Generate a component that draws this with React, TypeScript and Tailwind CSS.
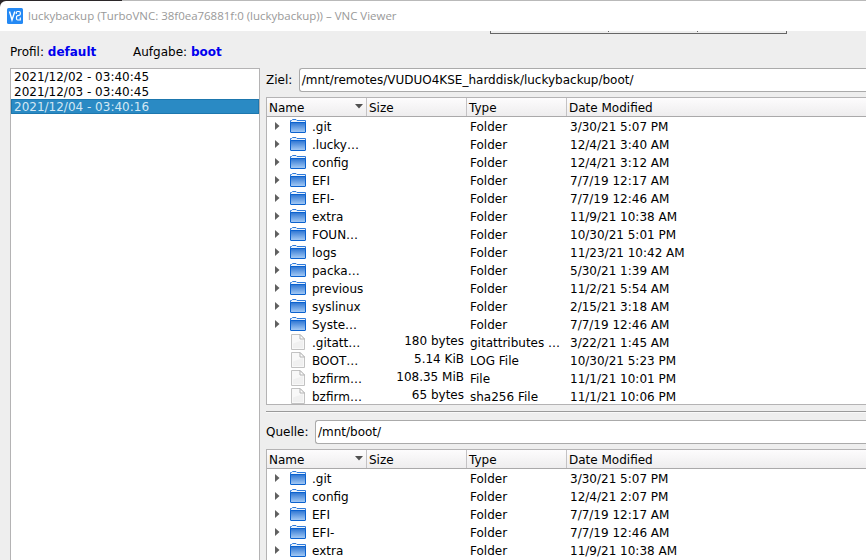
const snapshots = [
  { label: "2021/12/02 - 03:40:45", selected: false },
  { label: "2021/12/03 - 03:40:45", selected: false },
  { label: "2021/12/04 - 03:40:16", selected: true },
];

type Entry = {
  name: string;
  size?: string;
  type: string;
  date: string;
};

const targetEntries: Entry[] = [
  { name: ".git", type: "Folder", date: "3/30/21 5:07 PM" },
  { name: ".lucky…", type: "Folder", date: "12/4/21 3:40 AM" },
  { name: "config", type: "Folder", date: "12/4/21 3:12 AM" },
  { name: "EFI", type: "Folder", date: "7/7/19 12:17 AM" },
  { name: "EFI-", type: "Folder", date: "7/7/19 12:46 AM" },
  { name: "extra", type: "Folder", date: "11/9/21 10:38 AM" },
  { name: "FOUN…", type: "Folder", date: "10/30/21 5:01 PM" },
  { name: "logs", type: "Folder", date: "11/23/21 10:42 AM" },
  { name: "packa…", type: "Folder", date: "5/30/21 1:39 AM" },
  { name: "previous", type: "Folder", date: "11/2/21 5:54 AM" },
  { name: "syslinux", type: "Folder", date: "2/15/21 3:18 AM" },
  { name: "Syste…", type: "Folder", date: "7/7/19 12:46 AM" },
  { name: ".gitatt…", size: "180 bytes", type: "gitattributes …", date: "3/22/21 1:45 AM" },
  { name: "BOOT…", size: "5.14 KiB", type: "LOG File", date: "10/30/21 5:23 PM" },
  { name: "bzfirm…", size: "108.35 MiB", type: "File", date: "11/1/21 10:01 PM" },
  { name: "bzfirm…", size: "65 bytes", type: "sha256 File", date: "11/1/21 10:06 PM" },
];

const sourceEntries: Entry[] = [
  { name: ".git", type: "Folder", date: "3/30/21 5:07 PM" },
  { name: "config", type: "Folder", date: "12/4/21 2:07 PM" },
  { name: "EFI", type: "Folder", date: "7/7/19 12:17 AM" },
  { name: "EFI-", type: "Folder", date: "7/7/19 12:46 AM" },
  { name: "extra", type: "Folder", date: "11/9/21 10:38 AM" },
];

const FolderIcon = () => (
  <svg width="16" height="16" viewBox="0 0 16 16" className="shrink-0">
    <defs>
      <linearGradient id="folder" x1="0" y1="0" x2="0" y2="1">
        <stop offset="0" stopColor="#2b74d2" />
        <stop offset="1" stopColor="#a9cdf6" />
      </linearGradient>
    </defs>
    <path d="M.5 5V2.500h1L2.500 1.500h3.500l1 1h8.500V5z" fill="#eaf3fd" stroke="#2f7bdb" />
    <rect x=".5" y="4.500" width="15" height="10" rx=".5" fill="url(#folder)" stroke="#0b62cf" />
  </svg>
);

const FileIcon = () => (
  <svg width="16" height="16" viewBox="0 0 16 16" className="shrink-0">
    <path d="M1.500.5h8.500l4.500 4.500v10.500h-13z" fill="#f8f8f8" stroke="#c2c2c2" />
    <path d="M3 14V9.500L13 6v8z" fill="#f0f0f0" />
    <path d="M10 .5V5h4.500z" fill="#fff" stroke="#b2b2b2" />
  </svg>
);

const PathField = ({ label, value }: { label: string; value: string }) => (
  <div className="flex h-6 shrink-0 items-center">
    <span className="mr-[6.400px]">{label}</span>
    <div className="flex h-6 flex-1 items-center rounded-l-[3px] border border-r-0 border-[#aaaaaa] bg-white pl-0.5">
      {value}
    </div>
  </div>
);

const TableHeader = () => (
  <div className="flex h-[19px] shrink-0 border-b border-[#aaa9aa] bg-gradient-to-b from-[#fdfcfd] to-[#eeedee] leading-[21px]">
    <div className="flex w-[100px] justify-between border-r border-[#c4c2c4] pl-0.5 pr-[3px]">
      Name
      <svg width="8" height="5" viewBox="0 0 8 5" className="mt-[6px]">
        <path d="M0 0h8L4 4.500z" fill="#505050" />
      </svg>
    </div>
    <div className="w-[100px] border-r border-[#c4c2c4] pl-0.5">Size</div>
    <div className="w-[100px] border-r border-[#c4c2c4] pl-0.5">Type</div>
    <div className="pl-0.5">Date Modified</div>
  </div>
);

const FileTable = ({ entries }: { entries: Entry[] }) => (
  <>
    <TableHeader />
    {entries.map((entry, index) => (
      <div key={index} className="flex h-[18px] shrink-0 leading-[20px]">
        <div className="flex w-[100px] items-center">
          <span className="flex w-[23px] pl-2">
            {!entry.size && (
              <svg width="5" height="8" viewBox="0 0 5 8">
                <path d="M0 0l4.500 4L0 8z" fill="#606060" />
              </svg>
            )}
          </span>
          {entry.size ? <FileIcon /> : <FolderIcon />}
          <span className="ml-[6px] pt-px">{entry.name}</span>
        </div>
        <div className="w-[97px] text-right leading-[16px]">{entry.size}</div>
        <div className="w-[100px] pl-[6px]">{entry.type}</div>
        <div className="pl-[6px]">{entry.date}</div>
      </div>
    ))}
  </>
);

const App = () => (
  <div className="flex h-[560px] w-[866px] flex-col overflow-hidden bg-[#eeeeee] font-['DejaVu_Sans',sans-serif] text-xs whitespace-nowrap text-black">
    {/* Window title bar */}
    <div className="flex h-[31px] shrink-0 flex-col bg-[#2b2729]">
      <div className="flex h-px shrink-0">
        <div className="w-[122px] bg-[#2b2729]" />
        <div className="flex-1 bg-[#b9b9b9]" />
      </div>
      <div className="flex flex-1 items-center rounded-tl-[6px] bg-white pl-[7px]">
        <svg width="16" height="16" viewBox="0 0 16 16" className="mb-px">
          <rect width="16" height="16" rx="1.500" fill="#2489f4" />
          <path d="M2.500 3.500l2.500 8.500 2.800-8.500" fill="none" stroke="#fff" strokeWidth="1.400" />
          <path d="M9.300 6V4.700q0-1.200 1.200-1.200h1.600q1.200 0 1.200 1.200v1.200q0 1.200-1.200 1.400l-1.400.3q-1.200.3-1.200 1.500v1.700q0 1.200 1.200 1.200h2.600V9.500" fill="none" stroke="#fff" strokeWidth="1.200" />
        </svg>
        <span className="ml-[5px] font-['Open_Sans',sans-serif] text-[11.470px] text-[#999999]">
          luckybackup (TurboVNC: 38f0ea76881f:0 (luckybackup)) – VNC Viewer
        </span>
      </div>
    </div>

    {/* Lower edge of the viewer toolbar */}
    <div className="ml-[490px] flex h-[3px] w-[297px] shrink-0 border-x border-b border-[#666666]">
      <div className="h-px w-[118px] border-r border-[#666666]" />
      <div className="h-px w-[89px] border-r border-[#666666]" />
    </div>

    <div className="flex h-[34px] shrink-0 items-center pl-[10px] pt-[2px]">
      <span className="w-[123px]">
        Profil: <b className="text-[#0000ee]">default</b>
      </span>
      <span>
        Aufgabe: <b className="text-[#0000ee]">boot</b>
      </span>
    </div>

    <div className="flex min-h-0 flex-1 pl-[10px]">
      <div className="w-[250px] shrink-0 border border-b-0 border-[#b4b3b4] bg-white">
        {snapshots.map((snapshot) => (
          <div
            key={snapshot.label}
            className={
              snapshot.selected
                ? "h-[15px] border border-[#1d77ae] bg-[#2a8ac4] pl-0.5 leading-[14px] text-[#d3e8f4]"
                : "h-[15px] pl-[3px] leading-[16px]"
            }
          >
            {snapshot.label}
          </div>
        ))}
      </div>

      <div className="ml-[6px] flex flex-1 flex-col">
        <PathField label="Ziel:" value="/mnt/remotes/VUDUO4KSE_harddisk/luckybackup/boot/" />
        <div className="mt-[5px] flex h-[308px] shrink-0 flex-col overflow-hidden border border-r-0 border-[#b4b3b4] bg-white">
          <FileTable entries={targetEntries} />
        </div>
        <div className="mt-[6px] h-[2px] shrink-0 border-t border-b border-t-[#9a9a9a] border-b-[#f9f9f9]" />
        <div className="mt-[7px] flex flex-1 flex-col">
          <PathField label="Quelle:" value="/mnt/boot/" />
          <div className="mt-[5px] flex flex-1 flex-col overflow-hidden border border-r-0 border-b-0 border-[#b4b3b4] bg-white">
            <FileTable entries={sourceEntries} />
          </div>
        </div>
      </div>
    </div>
  </div>
);

export default App;
